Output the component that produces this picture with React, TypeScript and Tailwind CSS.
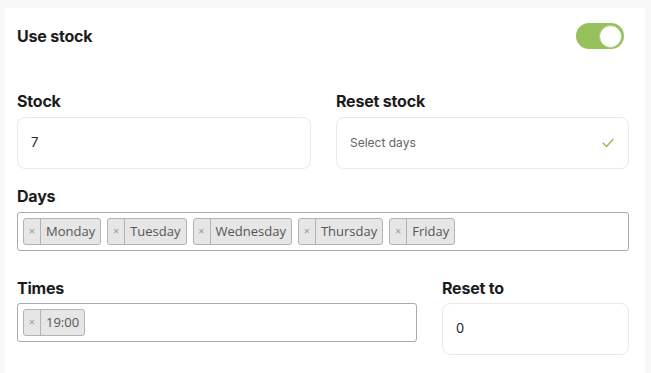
import React from 'react';

const labelCls = "text-[16px] leading-[20px] font-bold text-[#1c1c1c] font-['Inter',sans-serif] tracking-[-0.2px]";
const inputCls = 'h-[52px] rounded-[8px] border border-[#e9e9e9] bg-white flex items-center px-[13px]';

function Chip({ text }: { text: string }) {
  return (
    <div className="flex h-[27px] items-stretch rounded-[3px] border border-[#b3b3b3] bg-[#e6e6e6] font-['Open_Sans',sans-serif]">
      <span className="flex w-[17px] items-center justify-center border-r border-[#b3b3b3] text-[11px] text-[#999]">×</span>
      <span className="flex items-center px-[5px] text-[13px] text-[#555]">{text}</span>
    </div>
  );
}

export default function App() {
  const days = ['Monday', 'Tuesday', 'Wednesday', 'Thursday', 'Friday'];

  return (
    <div className="h-[373px] w-[651px] overflow-hidden bg-[#f8f8f8] pl-[5px] pr-[6px] pt-[8px]">
      <div className="h-full bg-white px-[12px] pt-[15px]">
        {/* use stock */}
        <div className="flex h-[26px] items-center justify-between pr-[9px]">
          <span className={labelCls}>Use stock</span>
          <div className="flex h-[26px] w-[48px] items-center justify-end rounded-full bg-[#95c05a] pr-[2px]">
            <div className="h-[23px] w-[23px] rounded-full border border-[#a9cf7a] bg-white" />
          </div>
        </div>

        {/* stock + reset stock */}
        <div className="mt-[42px] grid grid-cols-[294px_293px] gap-x-[25px]">
          <div>
            <div className={labelCls}>Stock</div>
            <div className={`mt-[6px] ${inputCls} font-['Inter',sans-serif] text-[13px] text-[#222]`}>7</div>
          </div>
          <div>
            <div className={labelCls}>Reset stock</div>
            <div className={`mt-[6px] ${inputCls} justify-between pr-[14px] font-['Inter',sans-serif] text-[12px] text-[#666]`}>
              <span>Select days</span>
              <svg width="12" height="10" viewBox="0 0 12 10" fill="none">
                <polyline points="1,5 4.5,8.5 11,1.5" stroke="#8cbc57" strokeWidth="1.4" strokeLinecap="round" strokeLinejoin="round" />
              </svg>
            </div>
          </div>
        </div>

        {/* days */}
        <div className="mt-[17px]">
          <div className={labelCls}>Days</div>
          <div className="mt-[6px] flex h-[39px] w-[612px] items-center gap-[6px] rounded-[3px] border border-[#aaa] px-[5px]">
            {days.map((d) => (
              <Chip key={d} text={d} />
            ))}
          </div>
        </div>

        {/* times + reset to */}
        <div className="mt-[27px] grid grid-cols-[400px_187px] gap-x-[25px]">
          <div>
            <div className={labelCls}>Times</div>
            <div className="mt-[5px] flex h-[39px] items-center rounded-[3px] border border-[#aaa] px-[5px]">
              <Chip text="19:00" />
            </div>
          </div>
          <div>
            <div className={labelCls}>Reset to</div>
            <div className={`mt-[5px] ${inputCls} font-['Inter',sans-serif] text-[13px] text-[#222]`}>0</div>
          </div>
        </div>
      </div>
    </div>
  );
}
